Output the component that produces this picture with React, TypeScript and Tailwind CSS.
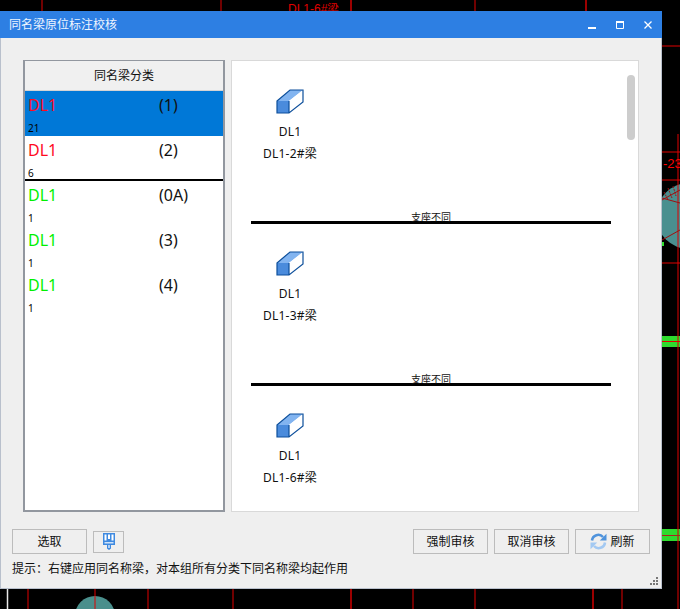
const GROUPS = [
  { name: 'DL1', tag: '(1)', count: '21', color: 'text-[#ff0a1e]', selected: true },
  { name: 'DL1', tag: '(2)', count: '6', color: 'text-[#ff0a1e]', divider: true },
  { name: 'DL1', tag: '(0A)', count: '1', color: 'text-[#00f000]' },
  { name: 'DL1', tag: '(3)', count: '1', color: 'text-[#00f000]' },
  { name: 'DL1', tag: '(4)', count: '1', color: 'text-[#00f000]' },
]

const BEAMS = ['DL1-2#梁', 'DL1-3#梁', 'DL1-6#梁']

function CadBackdrop() {
  return (
    <svg className="absolute inset-0" width="680" height="609" viewBox="0 0 680 609">
      <rect width="680" height="609" fill="#000" />
      {/* drawing lines behind the dialog */}
      <circle cx="95" cy="616" r="20" fill="#4a8f8c" />
      <circle cx="689" cy="216" r="33" fill="#4a8f8f" />
      <rect x="662" y="242" width="2" height="4" fill="#30e030" />
      <rect x="662" y="336" width="18" height="11" fill="#2edb2e" />
      <rect x="662" y="529" width="18" height="12" fill="#2edb2e" />
      <g stroke="#e00000" strokeWidth="1">
        <path d="M42 0V11M221 0V11M475 0V11M28 588V609M95 588V609M148 588V609M233 588V609M413 588V609M475 588V609M622 588V609" />
        <path d="M662 46H680M662 152H680M662 180H680M662 263H680M678 134V609M662 341.5H680" />
      </g>
      <path d="M351 0V11M586 0V11M351 588V609M593 588V609" stroke="#9c0000" strokeWidth="2" />
      <path d="M7.5 588V609" stroke="#e8e8e8" strokeWidth="1.5" />
      <path d="M662 200L680 190M662 198L680 203M662 240L680 230" stroke="#a01010" />
      <path d="M668 188l4 10M673 186l3 10M664 192l4 8" stroke="#a01010" strokeDasharray="2 1" />
      <path d="M662 535.5H680" stroke="#b02020" />
      <text x="288" y="13" fill="#e00000" fontSize="12" fontFamily="Liberation Sans">DL1-6#梁</text>
      <text x="663" y="168" fill="#ff0000" fontSize="13" fontFamily="Liberation Sans">-23</text>
    </svg>
  )
}

function BeamIcon() {
  return (
    <svg width="28" height="25" viewBox="0 0 28 25">
      <path d="M1 12L14 1H27L13 12Z" fill="#82b4f0" />
      <path d="M13 12L27 1V13L13 24Z" fill="#fff" />
      <path d="M1 12H13V24H1Z" fill="#4a8bdc" />
      <path d="M1 12L14 1H27V13L13 24H1ZM13 12V24" fill="none" stroke="#0d4f9b" strokeWidth="1.2" />
    </svg>
  )
}

function BrushIcon() {
  return (
    <svg width="12" height="17" viewBox="0 0 12 17">
      <path d="M0 0H12V12H8V15.5L6 17L4 15.5V12H0Z" fill="#3f8ae0" />
      <path d="M1.5 1.5H3.5V7.5H1.5ZM5 1.5H7V6H5ZM8.5 1.5H10.5V7.5H8.5Z" fill="#fff" />
      <path d="M1.5 9H10.5V10.5H1.5Z" fill="#cfe3fa" />
      <path d="M5.2 12H6.8V15H5.2Z" fill="#cfe3fa" />
    </svg>
  )
}

function RefreshIcon() {
  return (
    <svg width="17" height="17" viewBox="0 0 17 17">
      <path d="M2 7.5A6.3 6.3 0 0 1 13 4" fill="none" stroke="#4f93dc" strokeWidth="2.6" />
      <path d="M16.5 0.8V7.5H9.8Z" fill="#4f93dc" />
      <path d="M15 9.5A6.3 6.3 0 0 1 4 13" fill="none" stroke="#a3c9f2" strokeWidth="2.6" />
      <path d="M0.5 16.2V9.5H7.2Z" fill="#a3c9f2" />
    </svg>
  )
}

function WindowButtons() {
  return (
    <div className="flex items-center gap-[20px] pr-[10px]">
      <svg width="8" height="8" viewBox="0 0 8 8">
        <rect y="6" width="8" height="2" fill="#fff" />
      </svg>
      <svg width="8" height="8" viewBox="0 0 8 8">
        <path d="M0.5 1.5H7.5V7.5H0.5Z" fill="none" stroke="#fff" />
        <rect width="8" height="2" fill="#fff" />
      </svg>
      <svg width="8" height="8" viewBox="0 0 8 8">
        <path d="M0.5 0.5L7.5 7.5M7.5 0.5L0.5 7.5" stroke="#fff" strokeWidth="1.3" />
      </svg>
    </div>
  )
}

function FooterButton({ label, icon }: { label: string; icon?: React.ReactNode }) {
  return (
    <button className="flex items-center justify-center gap-[3px] w-[75px] h-[25px] border border-[#bcbcbc] bg-[#efefef] text-xs text-[#111]">
      {icon}
      {label}
    </button>
  )
}

export default function App() {
  return (
    <div className="relative w-[680px] h-[609px] overflow-hidden bg-black font-['Noto_Sans','Noto_Sans_CJK_SC',sans-serif]">
      <CadBackdrop />

      <div className="absolute left-0 top-[11px] w-[662px] h-[578px] flex flex-col bg-[#efefef] border-x border-b border-[#b9c0cc]">
        <div className="flex items-center justify-between h-[27px] -mx-px bg-[#2d7fe3] pl-[9px] text-xs text-[#eef5ff]">
          <span>同名梁原位标注校核</span>
          <WindowButtons />
        </div>

        <div className="flex gap-[6px] pl-[22px] pt-[22px]">
          {/* group list */}
          <div className="w-[202px] h-[452px] bg-white border-x-2 border-b-2 border-t border-[#92979f]">
            <div className="flex items-center justify-center h-[30px] bg-[#f0f0f0] border-b border-[#d4d4d4] text-xs text-[#111]">
              同名梁分类
            </div>
            {GROUPS.map((g) => (
              <div
                key={g.tag}
                className={`h-[45px] pl-[3px] ${g.selected ? 'bg-[#0078d7]' : ''} ${g.divider ? 'border-b-2 border-black' : ''}`}
              >
                <div className="flex items-center h-[27px]">
                  <span className={`w-[131px] text-base ${g.color}`}>{g.name}</span>
                  <span className="text-base text-[#111]">{g.tag}</span>
                </div>
                <div className="mt-[3px] text-[10px] leading-[14px] text-black">{g.count}</div>
              </div>
            ))}
          </div>

          {/* beam detail */}
          <div className="relative w-[408px] h-[452px] overflow-hidden bg-white border border-[#d9d9d9] pt-[28px]">
            <div className="absolute right-[3px] top-[14px] w-[8px] h-[65px] rounded bg-[#cdcdcd]" />
            {BEAMS.map((beam, i) => (
              <div key={beam} className="h-[162px] pl-[19px]">
                <div className="flex flex-col items-center w-[78px] text-xs tracking-[0.2px] text-[#111]">
                  <BeamIcon />
                  <div className="mt-[7px] leading-[22px]">DL1</div>
                  <div className="leading-[22px]">{beam}</div>
                </div>
                {i < 2 && (
                  <div className="relative mt-[56px] w-[360px] h-[3px] bg-black">
                    <span className="absolute left-[160px] -top-[11px] text-[10px] leading-[14px] text-[#111]">
                      支座不同
                    </span>
                  </div>
                )}
              </div>
            ))}
          </div>
        </div>

        <div className="flex items-center justify-between pl-[11px] pr-[11px] mt-[17px]">
          <div className="flex items-center gap-[6px]">
            <FooterButton label="选取" />
            <button className="flex items-center justify-center w-[31px] h-[22px] border border-[#bcbcbc]">
              <BrushIcon />
            </button>
          </div>
          <div className="flex gap-[6px]">
            <FooterButton label="强制审核" />
            <FooterButton label="取消审核" />
            <FooterButton label="刷新" icon={<RefreshIcon />} />
          </div>
        </div>

        <div className="pl-[11px] mt-[6px] text-xs leading-[18px] text-[#111]">
          提示：右键应用同名称梁，对本组所有分类下同名称梁均起作用
        </div>

        <svg className="absolute right-[3px] bottom-[3px]" width="8" height="8" viewBox="0 0 8 8" fill="#777">
          <rect x="6" y="0" width="2" height="2" />
          <rect x="3" y="3" width="2" height="2" />
          <rect x="6" y="3" width="2" height="2" />
          <rect x="0" y="6" width="2" height="2" />
          <rect x="3" y="6" width="2" height="2" />
          <rect x="6" y="6" width="2" height="2" />
        </svg>
      </div>
    </div>
  )
}
